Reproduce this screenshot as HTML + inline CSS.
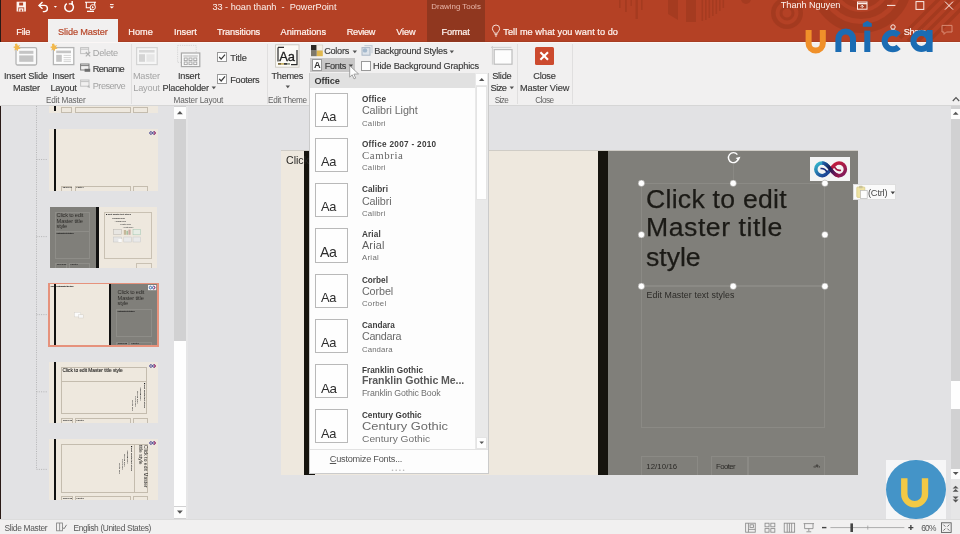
<!DOCTYPE html>
<html>
<head>
<meta charset="utf-8">
<title>PowerPoint Slide Master</title>
<style>
*{box-sizing:border-box;margin:0;padding:0}
html,body{width:960px;height:534px;overflow:hidden;background:#e2e2e4;font-family:"Liberation Sans",sans-serif;}
#app{position:absolute;left:0;top:0;width:960px;height:534px;background:#e2e2e4;filter:blur(0.45px);will-change:transform;}
.abs{position:absolute}
.t{position:absolute;white-space:nowrap;line-height:1;display:block}
svg{position:absolute;overflow:visible}
/* title + tabs */
#titlebar{left:-6px;top:-6px;width:972px;height:47.6px;background:linear-gradient(#b44125,#b44125 97.400%,#9f3a20);}
#ctx{left:427px;top:-6px;width:58px;height:48px;background:#90371f;}
#acttab{left:48px;top:19px;width:70px;height:24px;background:#f1f0f0;}
.tab{color:#fff5f1;font-size:9.2px;top:27.6px;-webkit-text-stroke:0.2px #fff5f1;}
/* ribbon */
#ribbon{left:-6px;top:42px;width:972px;height:64px;background:#f1f0f0;border-bottom:1px solid #d6d6d6;}
.rl{color:#3a3a3a;font-size:9.2px;-webkit-text-stroke:0.15px #3a3a3a;}
.rg{color:#626262;font-size:8.2px;}
.rd{color:#a4a4a4;font-size:9.2px;}
.sep{position:absolute;width:1px;background:#e0dfdf;top:44px;height:60px;}
.cb{position:absolute;width:10px;height:10px;background:#fdfdfd;border:1px solid #999;}
/* status bar */
#status{left:-6px;top:520px;width:972px;height:20px;background:#f1f0f0;}
.st{color:#555;font-size:8.4px;top:523.6px}
</style>
</head>
<body>
<div id="app">
  <!-- TITLE BAR -->
  <div id="titlebar" class="abs"></div>
  <!-- decorative pattern -->
  <svg style="left:0;top:0" width="960" height="42" viewBox="0 0 960 42">
    <g fill="#a1391f" opacity="0.75">
      <rect x="619" y="0" width="1.6" height="8"/><rect x="625" y="0" width="1.8" height="12"/>
      <rect x="630.5" y="0" width="1.4" height="6"/><rect x="635.5" y="0" width="2.4" height="19"/>
      <rect x="641" y="0" width="1.6" height="10"/>
      <path d="M668 0h10v20l-10,-6z"/><rect x="686" y="0" width="10" height="22"/>
      <rect x="701.5" y="0" width="1.6" height="21"/><rect x="705" y="0" width="1.6" height="20"/>
      <rect x="708.5" y="0" width="1.6" height="18"/><rect x="712" y="0" width="1.6" height="16"/>
      <rect x="715.5" y="0" width="1.6" height="14"/><rect x="719" y="0" width="1.6" height="11"/>
      <rect x="722.5" y="0" width="1.6" height="8"/>
      <circle cx="746" cy="-1" r="5"/>
    </g>
    <g fill="none" stroke="#a1391f" opacity="0.8">
      <circle cx="787" cy="13" r="13.700" stroke-width="4.600"/>
      <circle cx="787" cy="13" r="6" stroke-width="3"/>
      <circle cx="861" cy="-18" r="46.500" stroke-width="9"/>
      <circle cx="861" cy="-18" r="33.500" stroke-width="7"/>
      <circle cx="861" cy="-18" r="23" stroke-width="6"/>
      <path d="M900 38L944 -6M908 41L955 -6M918 41L966 -7M930 40L972 -2" stroke-width="3.600"/>
    </g>
  </svg>
  <div id="ctx" class="abs"></div>
  <div id="acttab" class="abs"></div>
  <div class="abs" style="left:-6px;top:-6px;width:7.400px;height:525.600px;background:#2a1a16"></div>

  <!-- quick access icons -->
  <svg style="left:16px;top:1px" width="100" height="12" viewBox="0 0 100 12" fill="none" stroke="#fff" stroke-width="1.2">
    <!-- save -->
    <path d="M0.600 0.700h9.300v9.800h-9.300z" fill="#fdf3ef" stroke="none"/>
    <rect x="3.200" y="1.600" width="3.900" height="2.900" fill="#b44125" stroke="none"/>
    <rect x="2.300" y="6.400" width="5.900" height="4.100" fill="#b44125" stroke="none"/>
    <rect x="3.100" y="7.300" width="4.300" height="3.200" fill="#fdf3ef" stroke="none"/>
    <rect x="4.500" y="8.500" width="1.400" height="2" fill="#b44125" stroke="none"/>
    <!-- undo -->
    <path d="M26.5 1 L23 4.4 L26.5 7.8" stroke-width="1.4"/>
    <path d="M23.3 4.4 h5 a3.1 3.1 0 0 1 0 6.2 h-1.5" stroke-width="1.4"/>
    <path d="M37.8 5 l1.6 1.8 l1.6 -1.8z" fill="#fff" stroke="none"/>
    <!-- redo -->
    <path d="M55.300 2.500 a4.300 4.300 0 1 1 -4.500 0.100" stroke-width="1.500"/>
    <path d="M52.800 2.900 h3.400 v-3" stroke-width="1.400"/>
    <!-- present -->
    <path d="M69 1.2 h11 M70.3 1.2 v5.6 h8.4 v-5.6 M74.5 6.8 v2.2 M71 10.4 h7" stroke-width="1.1"/>
    <circle cx="76.8" cy="6.2" r="2.6" fill="#b44125" stroke-width="0.9"/>
    <path d="M76 5 l2 1.2 l-2 1.2z" fill="#fff" stroke="none"/>
    <!-- customize -->
    <path d="M94 3.6 h3.6" stroke-width="1"/>
    <path d="M93.6 5.4 l2.2 2.2 l2.2 -2.2z" fill="#fff" stroke="none"/>
  </svg>

  <span class="t" style="letter-spacing:-0.02px;left:212.4px;top:3.1px;font-size:9.2px;color:#fdf3ef;white-space:pre">33 - hoan thanh  -  PowerPoint</span>
  <span class="t" style="letter-spacing:0.01px;left:431.3px;top:3.1px;font-size:7.9px;color:#e7b5a8">Drawing Tools</span>
  <span class="t" style="letter-spacing:-0.07px;left:780.8px;top:0.9px;font-size:9.2px;color:#fdf3ef">Thanh Nguyen</span>

  <!-- window buttons -->
  <svg style="left:855px;top:0" width="105" height="14" viewBox="0 0 105 14" fill="none" stroke="#fbeee9" stroke-width="1">
    <rect x="2.5" y="2" width="9.5" height="7.2"/><path d="M2.5 3.6h9.5" stroke-width="1.4"/>
    <path d="M7.2 5.2v3 M5.6 6.8l1.6-1.6l1.6 1.6" stroke-width="0.9"/>
    <path d="M32 5.4h8.4"/>
    <rect x="61" y="1.6" width="7.8" height="7.8"/>
    <path d="M90 1.6l8 8M98 1.6l-8 8"/>
  </svg>

  <!-- tabs -->
  <span class="t tab" style="letter-spacing:-0.25px;left:16.3px;">File</span>
  <span class="t tab" style="letter-spacing:-0.11px;left:58px;color:#b7472a;-webkit-text-stroke:0.2px #b7472a">Slide Master</span>
  <span class="t tab" style="letter-spacing:0.02px;left:128.3px;">Home</span>
  <span class="t tab" style="letter-spacing:-0.03px;left:174px;">Insert</span>
  <span class="t tab" style="letter-spacing:-0.14px;left:217px;">Transitions</span>
  <span class="t tab" style="letter-spacing:0.01px;left:280.5px;">Animations</span>
  <span class="t tab" style="letter-spacing:-0.32px;left:346.8px;">Review</span>
  <span class="t tab" style="letter-spacing:-0.09px;left:396.2px;">View</span>
  <span class="t tab" style="letter-spacing:-0.15px;left:441.5px;">Format</span>
  <span class="t tab" style="letter-spacing:0.05px;left:503.3px;">Tell me what you want to do</span>
  <span class="t tab" style="letter-spacing:-0.51px;left:903.8px;">Share</span>
  <!-- bulb -->
  <svg style="left:491px;top:24px" width="10" height="13" viewBox="0 0 10 13" fill="none" stroke="#fbeee9" stroke-width="0.9">
    <path d="M3.4 9.2 c0-1.6-2-2.4-2-4.6 a3.6 3.6 0 0 1 7.2 0 c0 2.2-2 3-2 4.6z M3.6 10.6h2.8 M4 12h2"/>
  </svg>
  <!-- share person + comment -->
  <svg style="left:888px;top:23px" width="68" height="14" viewBox="0 0 68 14" fill="none" stroke="#fbeee9" stroke-width="1">
    <circle cx="5" cy="4" r="2.2"/><path d="M1 11c0-3 1.8-4.4 4-4.4s4 1.400 4 4.400"/>
    <path d="M54 2.400h10v6.600h-5.600l-2.400 2.400v-2.400h-2z" stroke="#d98a73"/>
  </svg>
  <!-- RIBBON -->
  <div id="ribbon" class="abs"></div>
  <div class="abs" style="left:-6px;top:41.600px;width:972px;height:1px;background:#fbf7f6"></div>
  <div class="sep" style="left:130.5px"></div>
  <div class="sep" style="left:266.5px"></div>
  <div class="sep" style="left:516.5px"></div>
  <div class="sep" style="left:571.5px"></div>

  <!-- Insert Slide Master icon -->
  <svg style="left:13px;top:43px" width="26" height="24" viewBox="0 0 26 24">
    <rect x="3" y="4.600" width="20.600" height="17.400" rx="1.5" fill="#fafafa" stroke="#b4b4b4" stroke-width="1.3"/>
    <rect x="6.200" y="7.800" width="14.200" height="3" fill="#c4c4c4"/>
    <rect x="6.200" y="12.400" width="14.200" height="6.400" fill="#c4c4c4"/>
    <path d="M4 0.600l0.900 2.200l2.300-0.700l-1.300 2l1.700 1.600l-2.400 0.200l-0.300 2.400l-1.500-1.900l-2.100 1.100l0.700-2.300l-2-1.200l2.200-0.800l-0.300-2.300z" fill="#f2b84b"/>
  </svg>
  <span class="t rl" style="letter-spacing:-0.18px;left:4px;top:72.4px">Insert Slide</span>
  <span class="t rl" style="letter-spacing:-0.22px;left:13px;top:84.4px">Master</span>
  <!-- Insert Layout icon -->
  <svg style="left:50px;top:43px" width="26" height="24" viewBox="0 0 26 24">
    <rect x="3.400" y="4.600" width="20.400" height="17" fill="#fdfdfd" stroke="#b4b4b4" stroke-width="1.3"/>
    <rect x="6.200" y="7.600" width="14.800" height="2.600" fill="#c4c4c4"/>
    <rect x="6.200" y="11.800" width="5.600" height="7" fill="#c4c4c4"/>
    <path d="M13.600 12.400h7.400M13.600 14.600h7.400M13.600 16.800h7.400M13.600 18.600h7.400" stroke="#cfcfcf" stroke-width="0.9"/>
    <path d="M4 0.600l0.900 2.200l2.300-0.700l-1.300 2l1.700 1.600l-2.400 0.200l-0.300 2.400l-1.500-1.900l-2.100 1.100l0.700-2.300l-2-1.200l2.200-0.800l-0.300-2.300z" fill="#f2b84b"/>
  </svg>
  <span class="t rl" style="letter-spacing:-0.16px;left:52.300px;top:72.4px">Insert</span>
  <span class="t rl" style="letter-spacing:-0.22px;left:50.400px;top:84.4px">Layout</span>
  <!-- Delete / Rename / Preserve -->
  <svg style="left:80px;top:46px" width="12" height="46" viewBox="0 0 12 46" fill="none">
    <rect x="0.600" y="1.600" width="8" height="6" stroke="#c2c2c2"/><path d="M0.600 3.200h8" stroke="#c2c2c2"/>
    <path d="M5.800 6l4.400 4.400M10.200 6l-4.400 4.400" stroke="#b0b0b0" stroke-width="1.1"/>
    <rect x="0.600" y="18" width="8.400" height="6" stroke="#7d7d7d"/><path d="M0.600 19.600h8.400" stroke="#7d7d7d"/>
    <rect x="4.600" y="22.800" width="5.600" height="3" fill="#6e6e6e"/>
    <rect x="0.600" y="34" width="8.400" height="6.200" stroke="#c2c2c2"/><path d="M0.600 35.600h8.400" stroke="#c2c2c2"/>
    <path d="M7 41l2-2l1 3z" fill="#b5b5b5"/>
  </svg>
  <span class="t rd" style="letter-spacing:-0.23px;left:92.800px;top:49.4px">Delete</span>
  <span class="t rl" style="letter-spacing:-0.59px;left:92.800px;top:65.4px;color:#3c3c3c">Rename</span>
  <span class="t rd" style="letter-spacing:-0.55px;left:92.800px;top:81.7px">Preserve</span>
  <span class="t rg" style="letter-spacing:-0.17px;left:46px;top:97.1px">Edit Master</span>

  <!-- Master Layout (disabled) -->
  <svg style="left:135px;top:45px" width="24" height="22" viewBox="0 0 24 22">
    <rect x="1.600" y="2.600" width="20.600" height="17" fill="#f6f6f6" stroke="#d4d4d4" stroke-width="1.200"/>
    <rect x="4" y="5" width="15.600" height="2.600" fill="#d8d8d8"/>
    <rect x="4" y="9.200" width="6" height="7.600" fill="#d4d4d4"/>
    <rect x="11.400" y="9.200" width="8.200" height="7.600" fill="#e6e6e6"/>
  </svg>
  <span class="t rd" style="letter-spacing:-0.17px;left:132.900px;top:72.4px">Master</span>
  <span class="t rd" style="letter-spacing:-0.20px;left:133.300px;top:84.4px">Layout</span>
  <!-- Insert Placeholder -->
  <svg style="left:176px;top:44px" width="26" height="25" viewBox="0 0 26 25" fill="none">
    <rect x="1.600" y="1.400" width="18.600" height="17" stroke="#d2d2d2" stroke-width="0.9" stroke-dasharray="1.200 1"/>
    <rect x="5.400" y="9" width="18.400" height="13.600" fill="#f8f8f8" stroke="#a8a8a8" stroke-width="1.200"/>
    <path d="M7.400 12h14.400" stroke="#b4b4b4" stroke-width="1"/>
    <g stroke="#a4a4a4" stroke-width="0.9"><rect x="8.200" y="14" width="3" height="2.600"/><rect x="13" y="14" width="3" height="2.600"/><rect x="17.800" y="14" width="3" height="2.600"/>
    <rect x="8.200" y="18" width="3" height="2.600"/><rect x="13" y="18" width="3" height="2.600"/><rect x="17.800" y="18" width="3" height="2.600"/></g>
  </svg>
  <span class="t rl" style="letter-spacing:-0.18px;left:177.900px;top:72.4px">Insert</span>
  <span class="t rl" style="letter-spacing:-0.20px;left:162.500px;top:84.4px">Placeholder</span>
  <svg style="left:211px;top:86px" width="6" height="4" viewBox="0 0 6 4"><path d="M0.600 0.600h4.400l-2.200 2.600z" fill="#555"/></svg>
  <div class="cb" style="left:217px;top:52.400px"></div>
  <div class="cb" style="left:217px;top:74.200px"></div>
  <svg style="left:217px;top:52.400px" width="10" height="32" viewBox="0 0 10 32" fill="none" stroke="#3a3a3a" stroke-width="1.200">
    <path d="M2.200 5l2 2.200l3.800-4.600"/><path d="M2.200 26.800l2 2.200l3.800-4.600"/>
  </svg>
  <span class="t rl" style="letter-spacing:-0.14px;left:230.300px;top:54.4px">Title</span>
  <span class="t rl" style="letter-spacing:-0.29px;left:230.300px;top:76.2px">Footers</span>
  <span class="t rg" style="letter-spacing:-0.18px;left:173.600px;top:97.1px">Master Layout</span>

  <!-- Themes -->
  <svg style="left:274px;top:43px" width="27" height="26" viewBox="0 0 27 26">
    <rect x="1.600" y="1.800" width="23.400" height="22.400" fill="#fbfaf6" stroke="#c9c6bd" stroke-width="0.9"/>
    <path d="M4 4.400h6M4 4.400v14M23 7v14.600h-6" fill="none" stroke="#2a2a2a" stroke-width="1.200"/>
    <text x="5.200" y="17.600" font-family="Liberation Sans, sans-serif" font-size="12.500" fill="#1c1c1c" stroke="#1c1c1c" stroke-width="0.300" textLength="15.800" lengthAdjust="spacingAndGlyphs">Aa</text>
    <rect x="4" y="20" width="3" height="1.800" fill="#7a6a3c"/><rect x="7" y="20" width="3" height="1.800" fill="#c9b46a"/>
    <rect x="10" y="20" width="3" height="1.800" fill="#3e3e3e"/><rect x="13" y="20" width="3" height="1.800" fill="#98a08a"/>
  </svg>
  <span class="t rl" style="letter-spacing:-0.28px;left:271.500px;top:72.4px">Themes</span>
  <svg style="left:284.500px;top:85px" width="6" height="4" viewBox="0 0 6 4"><path d="M0.600 0.600h4.400l-2.200 2.600z" fill="#555"/></svg>
  <span class="t rg" style="letter-spacing:-0.30px;left:268px;top:97.1px">Edit Theme</span>

  <!-- Colors -->
  <svg style="left:311px;top:44.500px" width="12" height="12" viewBox="0 0 12 12">
    <rect x="0" y="0" width="5.800" height="5.600" fill="#2c2a26"/><rect x="5.800" y="0" width="6" height="5.600" fill="#f4f1e8" stroke="#c8c4b8" stroke-width="0.500"/>
    <rect x="0" y="5.600" width="5.800" height="5.600" fill="#7d786c"/><rect x="5.800" y="5.600" width="6" height="5.600" fill="#e0b74e"/>
  </svg>
  <span class="t rl" style="letter-spacing:-0.29px;left:324.200px;top:47.4px">Colors</span>
  <svg style="left:351.500px;top:49.500px" width="6" height="4" viewBox="0 0 6 4"><path d="M0.600 0.600h4.400l-2.200 2.600z" fill="#555"/></svg>
  <!-- Background styles -->
  <svg style="left:361px;top:44px" width="12" height="13" viewBox="0 0 12 13" fill="none">
    <path d="M3.400 1.600h7.600v7.600" stroke="#c3ccd6" stroke-width="1.100"/>
    <rect x="1" y="3.600" width="8" height="7.600" fill="#dde3ea" stroke="#aab7c5" stroke-width="1"/>
    <circle cx="4" cy="6.400" r="2.200" fill="#a3b8cc"/>
  </svg>
  <span class="t rl" style="letter-spacing:-0.21px;left:374.300px;top:47.4px">Background Styles</span>
  <svg style="left:449px;top:49.500px" width="6" height="4" viewBox="0 0 6 4"><path d="M0.600 0.600h4.400l-2.200 2.600z" fill="#555"/></svg>
  <!-- Fonts (pressed) -->
  <div class="abs" style="left:310px;top:58px;width:45px;height:14px;background:#c8c7c7"></div>
  <div class="abs" style="left:311.500px;top:59.300px;width:10.800px;height:11.400px;background:#fcfcfc;border:0.6px solid #9a9a9a"></div>
  <span class="t" style="left:314px;top:61.300px;font-size:9.200px;color:#333;font-weight:bold">A</span>
  <span class="t rl" style="letter-spacing:-0.34px;left:324.700px;top:62.2px">Fonts</span>
  <svg style="left:347.500px;top:64.400px" width="6" height="4" viewBox="0 0 6 4"><path d="M0.600 0.600h4.400l-2.200 2.600z" fill="#444"/></svg>
  <div class="cb" style="left:360.500px;top:60.600px"></div>
  <span class="t rl" style="letter-spacing:-0.16px;left:373px;top:62.2px">Hide Background Graphics</span>

  <!-- Slide size -->
  <svg style="left:490px;top:45px" width="24" height="22" viewBox="0 0 24 22" fill="none">
    <path d="M1 2.400h20.400M2.400 1v18.600" stroke="#cfcfcf" stroke-width="1"/>
    <rect x="4.200" y="4.600" width="17.800" height="14.600" fill="#fdfdfd" stroke="#bdbdbd" stroke-width="1.200"/>
  </svg>
  <span class="t rl" style="letter-spacing:-0.25px;left:492.200px;top:72.4px">Slide</span>
  <span class="t rl" style="letter-spacing:-0.54px;left:490.600px;top:84.0px">Size</span>
  <svg style="left:508.500px;top:85.800px" width="6" height="4" viewBox="0 0 6 4"><path d="M0.600 0.600h4.400l-2.200 2.600z" fill="#555"/></svg>
  <span class="t rg" style="letter-spacing:-0.58px;left:494.700px;top:97.1px">Size</span>
  <!-- Close master view -->
  <div class="abs" style="left:535.300px;top:47px;width:18.400px;height:18px;background:#cc4a2e;border-radius:1.500px"></div>
  <svg style="left:535.300px;top:47px" width="18.400" height="18" viewBox="0 0 18.400 18"><path d="M5.400 5.200l7.600 7.600M13 5.200l-7.600 7.600" stroke="#fff" stroke-width="2.100" fill="none"/></svg>
  <span class="t rl" style="letter-spacing:-0.24px;left:533.300px;top:72.4px">Close</span>
  <span class="t rl" style="letter-spacing:-0.11px;left:520px;top:84.0px">Master View</span>
  <span class="t rg" style="letter-spacing:-0.53px;left:535.300px;top:97.1px">Close</span>
  <!-- collapse caret -->
  <svg style="left:951.500px;top:96px" width="8" height="6" viewBox="0 0 8 6"><path d="M0.800 5l3.200-3.400l3.200 3.400" fill="none" stroke="#555" stroke-width="1.200"/></svg>
  <!-- LEFT PANEL -->
  <div class="abs" style="left:1.400px;top:106px;width:187px;height:414px;background:#e2e2e4"></div>
  <!-- panel scrollbar -->
  <div class="abs" style="left:174px;top:106px;width:12.400px;height:414px;background:#d1d1d2"></div>
  <div class="abs" style="left:186.400px;top:106px;width:2px;height:414px;background:#e6e6e7"></div>
  <div class="abs" style="left:174.400px;top:107.400px;width:11.600px;height:11.600px;background:#fdfdfd"></div>
  <div class="abs" style="left:174.400px;top:340.500px;width:11.600px;height:165px;background:#fefefe"></div>
  <div class="abs" style="left:174.400px;top:507px;width:11.600px;height:11.400px;background:#fdfdfd"></div>
  <svg style="left:174.400px;top:107.400px" width="12" height="412" viewBox="0 0 12 412">
    <path d="M3 7.200l2.900-3.200l2.900 3.200z" fill="#555"/>
    <path d="M3 403.600l2.900 3.200l2.900-3.200z" fill="#555"/>
  </svg>
  <!-- tree dotted lines -->
  <svg style="left:0;top:106px" width="50" height="414" viewBox="0 0 50 414" fill="none" stroke="#a9a9ab" stroke-width="0.800" stroke-dasharray="1 1.300">
    <path d="M36.500 0v363.400M36.500 53.500h11M36.500 130.600h11M36.500 208.600h11M36.500 285.800h11M36.500 363.400h11"/>
  </svg>

  <!-- thumb 1 (partially visible) -->
  <div class="abs" style="left:49px;top:106px;width:109px;height:6.600px;background:#eee8de;overflow:hidden">
    <div class="abs" style="left:4.600px;top:0;width:2.500px;height:4.500px;background:#111"></div>
    <div class="abs" style="left:12px;top:1px;width:11.200px;height:6px;border:0.600px solid #c4bcae"></div>
    <div class="abs" style="left:25.600px;top:1px;width:56.400px;height:6px;border:0.600px solid #c4bcae"></div>
    <div class="abs" style="left:84.400px;top:1px;width:14.200px;height:6px;border:0.600px solid #c4bcae"></div>
  </div>

  <!-- thumb 2 -->
  <div class="abs" style="left:49px;top:128.600px;width:109px;height:62px;background:#eee8de;overflow:hidden">
    <div class="abs" style="left:4.600px;top:0;width:2.500px;height:62px;background:#111"></div>
    <div class="abs" style="left:12px;top:57px;width:11.200px;height:6px;border:0.600px solid #c4bcae"></div>
    <div class="abs" style="left:25.600px;top:57px;width:56.400px;height:6px;border:0.600px solid #c4bcae"></div>
    <div class="abs" style="left:84.400px;top:57px;width:14.200px;height:6px;border:0.600px solid #c4bcae"></div>
    <span class="t" style="left:13.500px;top:58.600px;font-size:2.400px;color:#222;font-weight:bold">12/10/16</span>
    <span class="t" style="left:27.200px;top:58.600px;font-size:2.400px;color:#222;font-weight:bold">Footer</span>
    <svg style="left:99.600px;top:2.400px" width="7" height="4" viewBox="0 0 34 20"><path d="M10 3a7 7 0 1 0 0 14c5 0 9-14 14-14a7 7 0 1 1 0 14c-5 0-9-14-14-14z" fill="none" stroke="#3c3a8c" stroke-width="4.500"/><path d="M24 3a7 7 0 1 1 0 14" fill="none" stroke="#c2326a" stroke-width="4.500"/></svg>
  </div>

  <!-- thumb 3 -->
  <div class="abs" style="left:49.800px;top:206.800px;width:107.400px;height:61px;background:#eee8de;overflow:hidden">
    <div class="abs" style="left:0;top:0;width:46.400px;height:61px;background:#807f7a"></div>
    <div class="abs" style="left:46.400px;top:0;width:2.500px;height:61px;background:#111"></div>
    <div class="abs" style="left:5.500px;top:5.200px;width:35.200px;height:47.400px;border:0.500px solid #8e8d88"></div>
    <div class="abs" style="left:5.500px;top:24.600px;width:35.200px;height:0.500px;background:#8e8d88"></div>
    <span class="t" style="letter-spacing:-0.19px;left:6.800px;top:6.200px;font-size:5.600px;color:#2c2b28">Click to edit</span>
    <span class="t" style="letter-spacing:-0.11px;left:6.800px;top:11.800px;font-size:5.600px;color:#2c2b28">Master title</span>
    <span class="t" style="letter-spacing:-0.26px;left:6.800px;top:17.400px;font-size:5.600px;color:#2c2b28">style</span>
    <span class="t" style="letter-spacing:-0.36px;left:6.800px;top:26.200px;font-size:2.400px;color:#222;font-weight:bold">Edit Master text styles</span>
    <div class="abs" style="left:5.500px;top:56px;width:12px;height:6px;border:0.500px solid #8e8d88"></div>
    <div class="abs" style="left:19px;top:56px;width:21.700px;height:6px;border:0.500px solid #8e8d88"></div>
    <span class="t" style="left:7.200px;top:57.600px;font-size:2.400px;color:#222;font-weight:bold">12/10/16</span>
    <span class="t" style="left:20.600px;top:57.600px;font-size:2.400px;color:#222;font-weight:bold">Footer</span>
    <div class="abs" style="left:54.400px;top:5.200px;width:47.600px;height:47.400px;border:0.600px solid #c9c1b3"></div>
    <span class="t" style="left:56.200px;top:6.600px;font-size:2.200px;color:#111;font-weight:bold">■ Edit Master text styles</span>
    <span class="t" style="left:60.800px;top:10.200px;font-size:2.100px;color:#222;font-weight:bold">– Second level</span>
    <span class="t" style="left:65px;top:13.600px;font-size:2px;color:#333;font-weight:bold">• Third level</span>
    <span class="t" style="left:69px;top:16.800px;font-size:1.900px;color:#444;font-weight:bold">– Fourth level</span>
    <span class="t" style="left:73px;top:19.800px;font-size:1.900px;color:#444;font-weight:bold">» Fifth level</span>
    <svg style="left:63.500px;top:21.800px" width="30" height="15" viewBox="0 0 30 15" fill="none">
      <rect x="0.600" y="0.600" width="8" height="5" fill="#e8e6e2" stroke="#b7b4ae" stroke-width="0.500"/>
      <rect x="10.800" y="1" width="2.200" height="4.800" fill="#c6b79a"/><rect x="13.400" y="1.800" width="1.600" height="4" fill="#a8c0a0"/><rect x="15.400" y="0.600" width="2.200" height="5.200" fill="#c9a9a0"/>
      <rect x="20" y="0.400" width="7.600" height="5.400" fill="#e6ece4" stroke="#9fc3ad" stroke-width="0.500"/>
      <rect x="0.600" y="8" width="8" height="5" fill="#e6e6e6" stroke="#c4c4c4" stroke-width="0.500"/><rect x="5.400" y="10" width="3.400" height="3" fill="#fafafa"/>
      <rect x="10.800" y="8" width="7.600" height="5" fill="#e9e9e9" stroke="#c8c8c8" stroke-width="0.500"/>
      <rect x="20" y="8" width="7.600" height="5" fill="#e9e9e9" stroke="#c8c8c8" stroke-width="0.500"/>
    </svg>
    <div class="abs" style="left:86.400px;top:56.400px;width:15.400px;height:6px;border:0.600px solid #c9c1b3"></div>
  </div>

  <!-- thumb 4 (selected) -->
  <div class="abs" style="left:48.200px;top:282.600px;width:110.800px;height:64.200px;background:#e6927c"></div>
  <div class="abs" style="left:49.800px;top:284.200px;width:107.600px;height:61px;background:#eee8de;overflow:hidden">
    <div class="abs" style="left:60.800px;top:0;width:46.800px;height:61px;background:#807f7a"></div>
    <div class="abs" style="left:3.800px;top:0;width:2.500px;height:61px;background:#111"></div>
    <div class="abs" style="left:58.900px;top:0;width:2px;height:61px;background:#111"></div>
    <span class="t" style="letter-spacing:-0.27px;left:0.600px;top:0.600px;font-size:2.300px;color:#111;font-weight:bold">Click to edit Master title style</span>
    <svg style="left:24.600px;top:27.400px" width="10" height="7" viewBox="0 0 10 7"><rect x="0.300" y="0.300" width="6.400" height="4.600" fill="#fbfbfb" stroke="#d0ccc4" stroke-width="0.400"/><rect x="4.600" y="2.800" width="4.600" height="3.200" fill="#f6f6f6" stroke="#cfcac2" stroke-width="0.400"/></svg>
    <svg style="left:98.200px;top:1px" width="8.200" height="5.200" viewBox="0 0 41 26"><rect width="41" height="26" fill="#f2f2f2"/><g transform="translate(3.500,3)"><path d="M10 3a7 7 0 1 0 0 14c5 0 9-14 14-14a7 7 0 1 1 0 14c-5 0-9-14-14-14z" fill="none" stroke="#2a5fa8" stroke-width="4.500"/><path d="M24 3a7 7 0 1 1 0 14" fill="none" stroke="#c2326a" stroke-width="4.500"/></g></svg>
    <span class="t" style="letter-spacing:-0.19px;left:67.800px;top:5.800px;font-size:5.600px;color:#2c2b28">Click to edit</span>
    <span class="t" style="letter-spacing:-0.11px;left:67.800px;top:11.400px;font-size:5.600px;color:#2c2b28">Master title</span>
    <span class="t" style="letter-spacing:-0.26px;left:67.800px;top:17px;font-size:5.600px;color:#2c2b28">style</span>
    <div class="abs" style="left:66.400px;top:25.200px;width:35.600px;height:28px;border:0.500px solid #8e8d88"></div>
    <span class="t" style="letter-spacing:-0.36px;left:67.800px;top:26.400px;font-size:2.400px;color:#222;font-weight:bold">Edit Master text styles</span>
    <div class="abs" style="left:66.400px;top:57.400px;width:11.400px;height:5px;border:0.500px solid #8e8d88"></div>
    <div class="abs" style="left:80px;top:57.400px;width:22px;height:5px;border:0.500px solid #8e8d88"></div>
    <span class="t" style="left:68px;top:58.600px;font-size:2.400px;color:#222;font-weight:bold">12/10/16</span>
    <span class="t" style="left:81.600px;top:58.600px;font-size:2.400px;color:#222;font-weight:bold">Footer</span>
  </div>

  <!-- thumb 5 -->
  <div class="abs" style="left:49px;top:361.500px;width:108.700px;height:61.500px;background:#eee8de;overflow:hidden">
    <div class="abs" style="left:4.600px;top:0;width:2.500px;height:61.500px;background:#111"></div>
    <div class="abs" style="left:12.200px;top:5.400px;width:85.600px;height:14.400px;border:0.600px solid #c4bcae;border-bottom:none"></div>
    <div class="abs" style="left:12.200px;top:19.200px;width:85.600px;height:33.800px;border:0.600px solid #c4bcae"></div>
    <span class="t" style="letter-spacing:-0.02px;left:13.500px;top:7.700px;font-size:4.800px;color:#1e1d1b;-webkit-text-stroke:0.1px #1e1d1b">Click to edit Master title style</span>
    <div class="abs" style="left:12.400px;top:56.800px;width:11.200px;height:6px;border:0.600px solid #c4bcae"></div>
    <div class="abs" style="left:25.700px;top:56.800px;width:56.200px;height:6px;border:0.600px solid #c4bcae"></div>
    <div class="abs" style="left:84.400px;top:56.800px;width:14.200px;height:6px;border:0.600px solid #c4bcae"></div>
    <span class="t" style="left:13.800px;top:58.400px;font-size:2.400px;color:#222;font-weight:bold">12/10/16</span>
    <span class="t" style="left:27.400px;top:58.400px;font-size:2.400px;color:#222;font-weight:bold">Footer</span>
    <svg style="left:99.600px;top:2.300px" width="7" height="4" viewBox="0 0 34 20"><path d="M10 3a7 7 0 1 0 0 14c5 0 9-14 14-14a7 7 0 1 1 0 14c-5 0-9-14-14-14z" fill="none" stroke="#3c3a8c" stroke-width="4.500"/><path d="M24 3a7 7 0 1 1 0 14" fill="none" stroke="#c2326a" stroke-width="4.500"/></svg>
    <!-- rotated bullet text -->
    <div class="abs" style="left:96.600px;top:21.500px;width:0;height:0;transform:rotate(90deg);transform-origin:0 0">
      <span class="t" style="left:0;top:0;font-size:2.200px;color:#111;font-weight:bold">■ Edit Master text styles</span>
      <span class="t" style="left:4.500px;top:3.600px;font-size:2.100px;color:#333;font-weight:bold">Second level</span>
      <span class="t" style="left:8.500px;top:7.200px;font-size:2px;color:#333;font-weight:bold">■ Third level</span>
      <span class="t" style="left:13px;top:10.400px;font-size:1.900px;color:#555;font-weight:bold">Fourth level</span>
      <span class="t" style="left:17.500px;top:13.400px;font-size:1.900px;color:#444;font-weight:bold">■ Fifth level</span>
    </div>
  </div>

  <!-- thumb 6 -->
  <div class="abs" style="left:49px;top:438.800px;width:108.700px;height:61.300px;background:#eee8de;overflow:hidden">
    <div class="abs" style="left:4.600px;top:0;width:2.500px;height:61.300px;background:#111"></div>
    <div class="abs" style="left:12.200px;top:5.400px;width:73.700px;height:48.400px;border:0.600px solid #c4bcae"></div>
    <div class="abs" style="left:85.300px;top:5.400px;width:13.800px;height:48.400px;border:0.600px solid #c4bcae"></div>
    <div class="abs" style="left:98.200px;top:6.200px;width:0;height:0;transform:rotate(90deg);transform-origin:0 0">
      <span class="t" style="letter-spacing:0.09px;left:0;top:0;font-size:4.800px;color:#262523">Click to edit Master</span>
      <span class="t" style="letter-spacing:0.08px;left:0;top:5px;font-size:4.800px;color:#262523">title style</span>
    </div>
    <div class="abs" style="left:83.800px;top:7px;width:0;height:0;transform:rotate(90deg);transform-origin:0 0">
      <span class="t" style="left:0;top:0;font-size:2.200px;color:#111;font-weight:bold">■ Edit Master text styles</span>
      <span class="t" style="left:4.500px;top:3.600px;font-size:2.100px;color:#333;font-weight:bold">Second level</span>
      <span class="t" style="left:8.500px;top:7.200px;font-size:2px;color:#333;font-weight:bold">■ Third level</span>
      <span class="t" style="left:13px;top:10.400px;font-size:1.900px;color:#555;font-weight:bold">Fourth level</span>
      <span class="t" style="left:17.500px;top:13.400px;font-size:1.900px;color:#444;font-weight:bold">■ Fifth level</span>
    </div>
    <div class="abs" style="left:12.400px;top:57.400px;width:11.200px;height:6px;border:0.600px solid #c4bcae"></div>
    <div class="abs" style="left:25.700px;top:57.400px;width:56.200px;height:6px;border:0.600px solid #c4bcae"></div>
    <div class="abs" style="left:84.400px;top:57.400px;width:14.200px;height:6px;border:0.600px solid #c4bcae"></div>
    <span class="t" style="left:13.800px;top:58.800px;font-size:2.400px;color:#222;font-weight:bold">12/10/16</span>
    <span class="t" style="left:27.400px;top:58.800px;font-size:2.400px;color:#222;font-weight:bold">Footer</span>
    <svg style="left:99.600px;top:2.300px" width="7" height="4" viewBox="0 0 34 20"><path d="M10 3a7 7 0 1 0 0 14c5 0 9-14 14-14a7 7 0 1 1 0 14c-5 0-9-14-14-14z" fill="none" stroke="#3c3a8c" stroke-width="4.500"/><path d="M24 3a7 7 0 1 1 0 14" fill="none" stroke="#c2326a" stroke-width="4.500"/></svg>
  </div>
  <!-- MAIN SLIDE -->
  <div class="abs" style="left:280.600px;top:150px;width:577.800px;height:325.400px;background:#cfccc6"></div>
  <div class="abs" style="left:281.200px;top:150.500px;width:576.600px;height:324.400px;background:#eee8de;overflow:hidden">
    <div class="abs" style="left:23.300px;top:0;width:5.400px;height:325px;background:#16140e"></div>
    <div class="abs" style="left:316.500px;top:0;width:10.700px;height:325px;background:#16140e"></div>
    <div class="abs" style="left:327.100px;top:0;width:250px;height:325px;background:#807f7a"></div>
    <span class="t" style="left:4.800px;top:4.200px;font-size:10.600px;color:#2a2926">Click to edit Master title style</span>
    <!-- placeholders (dotted outlines) -->
    <div class="abs" style="left:360.300px;top:135.200px;width:183.600px;height:142.600px;border:0.600px solid #8b8a85"></div>
    <div class="abs" style="left:360.300px;top:305.200px;width:57px;height:21px;border:0.600px solid #8b8a85"></div>
    <div class="abs" style="left:429.900px;top:305.200px;width:37px;height:21px;border:0.600px solid #8b8a85"></div>
    <div class="abs" style="left:466.800px;top:305.200px;width:77px;height:21px;border:0.600px solid #8b8a85"></div>
    <!-- selected title placeholder -->
    <div class="abs" style="left:360.300px;top:32.200px;width:183.600px;height:103.200px;border:0.600px solid #8b8a85"></div>
    <div class="abs" style="left:451.900px;top:12px;width:0.600px;height:20px;background:#8a8984"></div>
    <span class="t" style="letter-spacing:0.27px;left:364.800px;top:35.500px;font-size:26.600px;color:#1b1a16;-webkit-text-stroke:0.25px #1b1a16">Click to edit</span>
    <span class="t" style="letter-spacing:0.56px;left:364.800px;top:63.600px;font-size:26.600px;color:#1b1a16;-webkit-text-stroke:0.25px #1b1a16">Master title</span>
    <span class="t" style="letter-spacing:-0.02px;left:364.800px;top:93.600px;font-size:26.600px;color:#1b1a16;-webkit-text-stroke:0.25px #1b1a16">style</span>
    <span class="t" style="letter-spacing:0.08px;left:365.300px;top:140.200px;font-size:8.800px;color:#2b2a27">Edit Master text styles</span>
    <span class="t" style="letter-spacing:0.08px;left:365.100px;top:312.200px;font-size:7.800px;color:#2b2a27">12/10/16</span>
    <span class="t" style="letter-spacing:-0.59px;left:434.900px;top:312.200px;font-size:7.800px;color:#2b2a27">Footer</span>
    <span class="t" style="letter-spacing:0.05px;left:532.100px;top:313.200px;font-size:5.600px;color:#2b2a27">‹#›</span>
    <!-- logo -->
    <div class="abs" style="left:528.600px;top:6.900px;width:40.500px;height:23.800px;background:#f4f4f4"></div>
    <svg style="left:528.600px;top:6.900px" width="40.500" height="23.800" viewBox="0 0 40.500 23.800" fill="none">
      <defs>
        <linearGradient id="lgA" gradientUnits="userSpaceOnUse" x1="4" y1="4" x2="37" y2="20">
          <stop offset="0" stop-color="#35bdd0"/><stop offset="0.250" stop-color="#1f5ea8"/><stop offset="0.480" stop-color="#181a4e"/>
          <stop offset="0.620" stop-color="#5a1758"/><stop offset="0.850" stop-color="#b3163f"/><stop offset="1" stop-color="#c81e3c"/>
        </linearGradient>
        <linearGradient id="lgL" gradientUnits="userSpaceOnUse" x1="5" y1="6" x2="14" y2="20"><stop offset="0" stop-color="#35bdd0"/><stop offset="1" stop-color="#1b3f93"/></linearGradient>
        <linearGradient id="lgR" gradientUnits="userSpaceOnUse" x1="27" y1="4" x2="36" y2="19"><stop offset="0" stop-color="#c41c3c"/><stop offset="1" stop-color="#7a1a5c"/></linearGradient>
      </defs>
      <path d="M20.600 12.300C17.600 8 15.200 5.900 12.200 5.900A6.400 6.400 0 1 0 12.200 18.700C15.200 18.700 17.600 16.600 20.600 12.300" stroke="url(#lgL)" stroke-width="3.500"/>
      <path d="M20.600 12.300C23.600 8 26 5.900 29 5.900A6.400 6.400 0 1 1 29 18.700C26 18.700 23.600 16.600 20.600 12.300" stroke="url(#lgR)" stroke-width="3.500"/>
      <path d="M12.200 5.900C15.200 5.900 17.600 8 20.600 12.300C23.600 16.600 26 18.700 29 18.700" stroke="url(#lgA)" stroke-width="3.500"/>
      <path d="M10.500 11.600c2.500-0.600 5 0.800 6.800 3.600" stroke="#1b2f7c" stroke-width="1.600"/>
      <path d="M31 13.200c-2.600 0.700-5-0.700-6.600-3.400" stroke="#a3173f" stroke-width="1.600"/>
    </svg>
    <!-- handles -->
    <svg style="left:0;top:0" width="577" height="325" viewBox="0 0 577 325">
      <g fill="#fff" stroke="#8e8d88" stroke-width="0.500">
        <circle cx="360.400" cy="32.300" r="3.200"/><circle cx="452.200" cy="32.300" r="3.200"/><circle cx="543.900" cy="32.300" r="3.200"/>
        <circle cx="360.400" cy="83.700" r="3.200"/><circle cx="543.900" cy="83.700" r="3.200"/>
        <circle cx="360.400" cy="135.300" r="3.200"/><circle cx="452.200" cy="135.300" r="3.200"/><circle cx="543.900" cy="135.300" r="3.200"/>
      </g>
      <path d="M456.400 3.600a5 5 0 1 0 1 3.600" fill="none" stroke="#fff" stroke-width="1.400"/>
      <path d="M454.600 7l3.200 2.600l1.600-3.800z" fill="#fff"/>
    </svg>
  </div>

  <!-- paste options tag -->
  <div class="abs" style="left:853px;top:184px;width:43.400px;height:16.200px;background:#fafafa;border:0.500px solid #dedede"></div>
  <svg style="left:855.500px;top:185.200px" width="12" height="14" viewBox="0 0 12 14">
    <rect x="0.800" y="2" width="8" height="10.400" rx="0.800" fill="#eee2a2" stroke="#d6c985" stroke-width="0.700"/>
    <rect x="3" y="0.800" width="3.600" height="2.400" rx="0.600" fill="#c9c39a"/>
    <rect x="4.600" y="5.400" width="6.600" height="8" fill="#fdfdfd" stroke="#b9b9b9" stroke-width="0.700"/>
  </svg>
  <span class="t" style="letter-spacing:-0.25px;left:868px;top:187.600px;font-size:9.400px;color:#4a4a4a">(Ctrl)</span>
  <svg style="left:889.800px;top:190.500px" width="6" height="4" viewBox="0 0 6 4"><path d="M0.600 0.600h4.400l-2.200 2.600z" fill="#444"/></svg>

  <!-- right scrollbar -->
  <div class="abs" style="left:951px;top:106px;width:15px;height:414px;background:#d1d1d2"></div>
  <div class="abs" style="left:951.400px;top:108.600px;width:14.600px;height:10px;background:#fdfdfd"></div>
  <div class="abs" style="left:951.400px;top:380.800px;width:14.600px;height:27.800px;background:#fefefe"></div>
  <div class="abs" style="left:951.400px;top:469px;width:14.600px;height:9.600px;background:#fdfdfd"></div>
  <div class="abs" style="left:951px;top:479px;width:15px;height:41px;background:#e6e6e7"></div>
  <svg style="left:951px;top:106px" width="9" height="414" viewBox="0 0 9 414" fill="#555">
    <path d="M1.800 8.800l2.900-3l2.900 3z"/>
    <path d="M1.800 366l2.900 3l2.900-3z"/>
    <path d="M1.600 382.600l3-2.800l3 2.800z M1.600 385.800l3-2.800l3 2.800z"/>
    <path d="M1.600 390.400l3 2.800l3-2.800z M1.600 393.600l3 2.800l3-2.800z"/>
  </svg>

  <!-- U watermark -->
  <div class="abs" style="left:886.200px;top:459.800px;width:59.800px;height:59.800px;background:#f6f6f7"></div>
  <div class="abs" style="left:886.200px;top:459.700px;width:59.800px;height:59.800px;border-radius:50%;background:#4494c8"></div>
  <svg style="left:898px;top:476px" width="36" height="34" viewBox="0 0 36 34"><path d="M6.300 2.300v15.600a10.350 10.350 0 0 0 20.700 0v-15.600" fill="none" stroke="#f2c946" stroke-width="6.400"/></svg>

  <!-- Unica overlay logo -->
  <svg style="left:800px;top:18px" width="140" height="38" viewBox="0 0 140 38" fill="none" stroke-linecap="butt">
    <path d="M8.600 12v13.400a7.100 7.100 0 0 0 14.200 0v-13.400" stroke="#f0902a" stroke-width="6"/>
    <path d="M38.400 34v-13.200a7.300 7.300 0 0 1 14.600 0v13.200" stroke="#1b6cb3" stroke-width="6"/>
    <path d="M67.300 12.600v21.400" stroke="#1b6cb3" stroke-width="6"/>
    <path d="M62.800 8.800v-3.200l4.500-2.800l4.500 2.800v3.200z" fill="#1b6cb3"/>
    <path d="M98.600 17.200a8.200 8.200 0 1 0 0 11.600" stroke="#1b6cb3" stroke-width="6"/>
    <circle cx="121.400" cy="23" r="8" stroke="#1b6cb3" stroke-width="6"/>
    <path d="M129.600 12v22" stroke="#1b6cb3" stroke-width="6"/>
  </svg>
  <!-- FONTS DROPDOWN -->
  <div class="abs" style="left:305px;top:472px;width:10.400px;height:2.900px;background:#16140e"></div>
  <div class="abs" style="left:309.200px;top:72.500px;width:179.400px;height:401.200px;background:#cbcbcb"></div>
  <div class="abs" style="left:310px;top:73.200px;width:177.600px;height:399.700px;background:#fdfdfd"></div>
  <div class="abs" style="left:310px;top:73.200px;width:164.600px;height:14.500px;background:#e1e1e1"></div>
  <span class="t" style="letter-spacing:-0.11px;left:314.400px;top:77px;font-size:9.200px;font-weight:bold;color:#3a3a3a">Office</span>
  <div class="abs" style="left:474.600px;top:73.200px;width:13px;height:376px;background:#e9e9e9"></div>
  <div class="abs" style="left:475.600px;top:74px;width:11.400px;height:11.400px;background:#fefefe"></div>
  <div class="abs" style="left:475.600px;top:86px;width:11.400px;height:114.400px;background:#fefefe;border:0.600px solid #e4e4e4"></div>
  <div class="abs" style="left:475.600px;top:437.200px;width:11.400px;height:11.400px;background:#fefefe;border:0.600px solid #e4e4e4"></div>
  <svg style="left:475.600px;top:74px" width="12" height="376" viewBox="0 0 12 376" fill="#555"><path d="M3 7l2.700-3l2.700 3z"/><path d="M3.400 367.400l2.300 2.600l2.300-2.600z"/></svg>
  <div class="abs" style="left:315.300px;top:92.7px;width:32.600px;height:34.200px;background:#fefefe;border:0.900px solid #b9b9b9"></div>
  <span class="t" style="letter-spacing:-0.48px;left:321.1px;top:110.9px;font-size:12.8px;color:#2d2d2d">Aa</span>
  <span class="t" style="letter-spacing:0.21px;left:361.900px;top:95.8px;font-size:8.200px;font-weight:bold;color:#3d3d3d">Office</span>
  <span class="t" style="letter-spacing:-0.10px;left:361.900px;top:105.1px;font-size:10.8px;font-weight:400;font-family:'Liberation Sans',sans-serif;color:#6b6b6b">Calibri Light</span>
  <span class="t" style="letter-spacing:0.27px;left:361.900px;top:119.5px;font-size:7.800px;color:#707070">Calibri</span>
  <div class="abs" style="left:315.300px;top:137.9px;width:32.600px;height:34.200px;background:#fefefe;border:0.900px solid #b9b9b9"></div>
  <span class="t" style="letter-spacing:-0.48px;left:321.1px;top:156.1px;font-size:12.8px;color:#2d2d2d">Aa</span>
  <span class="t" style="letter-spacing:0.30px;left:361.900px;top:141.0px;font-size:8.200px;font-weight:bold;color:#3d3d3d">Office 2007 - 2010</span>
  <span class="t" style="letter-spacing:0.64px;left:361.900px;top:149.6px;font-size:10.8px;font-weight:400;font-family:'Liberation Serif',serif;color:#666">Cambria</span>
  <span class="t" style="letter-spacing:0.27px;left:361.900px;top:163.8px;font-size:7.800px;color:#707070">Calibri</span>
  <div class="abs" style="left:315.300px;top:183.2px;width:32.600px;height:34.200px;background:#fefefe;border:0.900px solid #b9b9b9"></div>
  <span class="t" style="letter-spacing:-0.48px;left:321.1px;top:201.3px;font-size:12.8px;color:#2d2d2d">Aa</span>
  <span class="t" style="letter-spacing:0.09px;left:361.900px;top:186.2px;font-size:8.200px;font-weight:bold;color:#3d3d3d">Calibri</span>
  <span class="t" style="letter-spacing:-0.16px;left:361.900px;top:195.5px;font-size:10.8px;font-weight:400;font-family:'Liberation Sans',sans-serif;color:#6b6b6b">Calibri</span>
  <span class="t" style="letter-spacing:0.21px;left:361.900px;top:210.0px;font-size:7.800px;color:#707070">Calibri</span>
  <div class="abs" style="left:315.300px;top:228.4px;width:32.600px;height:34.200px;background:#fefefe;border:0.900px solid #b9b9b9"></div>
  <span class="t" style="letter-spacing:-0.58px;left:320.1px;top:245.4px;font-size:14.2px;color:#2d2d2d">Aa</span>
  <span class="t" style="letter-spacing:0.14px;left:361.900px;top:231.4px;font-size:8.200px;font-weight:bold;color:#3d3d3d">Arial</span>
  <span class="t" style="letter-spacing:0.24px;left:361.900px;top:239.9px;font-size:10.8px;font-weight:400;font-family:'Liberation Sans',sans-serif;color:#5e5e5e">Arial</span>
  <span class="t" style="letter-spacing:0.32px;left:361.900px;top:254.3px;font-size:7.800px;color:#707070">Arial</span>
  <div class="abs" style="left:315.300px;top:273.6px;width:32.600px;height:34.200px;background:#fefefe;border:0.900px solid #b9b9b9"></div>
  <span class="t" style="letter-spacing:-0.48px;left:321.1px;top:291.8px;font-size:12.8px;color:#2d2d2d">Aa</span>
  <span class="t" style="letter-spacing:0.03px;left:361.900px;top:276.7px;font-size:8.200px;font-weight:bold;color:#3d3d3d">Corbel</span>
  <span class="t" style="letter-spacing:-0.10px;left:361.900px;top:286.0px;font-size:10.8px;font-weight:400;font-family:'Liberation Sans',sans-serif;color:#6b6b6b">Corbel</span>
  <span class="t" style="letter-spacing:0.26px;left:361.900px;top:300.4px;font-size:7.800px;color:#707070">Corbel</span>
  <div class="abs" style="left:315.300px;top:318.8px;width:32.600px;height:34.200px;background:#fefefe;border:0.900px solid #b9b9b9"></div>
  <span class="t" style="letter-spacing:-0.48px;left:321.1px;top:337.0px;font-size:12.8px;color:#2d2d2d">Aa</span>
  <span class="t" style="letter-spacing:0.02px;left:361.900px;top:321.9px;font-size:8.200px;font-weight:bold;color:#3d3d3d">Candara</span>
  <span class="t" style="letter-spacing:-0.30px;left:361.900px;top:331.2px;font-size:10.8px;font-weight:400;font-family:'Liberation Sans',sans-serif;color:#6b6b6b">Candara</span>
  <span class="t" style="letter-spacing:0.14px;left:361.900px;top:345.6px;font-size:7.800px;color:#707070">Candara</span>
  <div class="abs" style="left:315.300px;top:364.1px;width:32.600px;height:34.200px;background:#fefefe;border:0.900px solid #b9b9b9"></div>
  <span class="t" style="letter-spacing:-0.60px;left:321.1px;top:381.7px;font-size:13.4px;color:#2d2d2d">Aa</span>
  <span class="t" style="letter-spacing:0.08px;left:361.900px;top:367.1px;font-size:8.200px;font-weight:bold;color:#3d3d3d">Franklin Gothic</span>
  <span class="t" style="letter-spacing:-0.09px;left:361.900px;top:375.1px;font-size:10.6px;font-weight:700;font-family:'Liberation Sans',sans-serif;color:#5a5a5a">Franklin Gothic Me...</span>
  <span class="t" style="letter-spacing:-0.15px;left:361.900px;top:389.3px;font-size:8.800px;color:#707070">Franklin Gothic Book</span>
  <div class="abs" style="left:315.300px;top:409.3px;width:32.600px;height:34.200px;background:#fefefe;border:0.900px solid #b9b9b9"></div>
  <span class="t" style="letter-spacing:-0.48px;left:321.1px;top:427.5px;font-size:12.8px;color:#2d2d2d">Aa</span>
  <span class="t" style="letter-spacing:0.05px;left:361.900px;top:412.4px;font-size:8.200px;font-weight:bold;color:#3d3d3d">Century Gothic</span>
  <span class="t" style="transform:scaleX(1.093);transform-origin:0 0;left:361.900px;top:420.8px;font-size:11.800px;font-weight:400;font-family:'Liberation Sans',sans-serif;color:#6b6b6b">Century Gothic</span>
  <span class="t" style="transform:scaleX(1.161);transform-origin:0 0;left:361.900px;top:435.4px;font-size:8.800px;color:#707070">Century Gothic</span>
  <div class="abs" style="left:310px;top:449px;width:177.600px;height:0.800px;background:#e2e2e2"></div>
  <span class="t" style="letter-spacing:-0.24px;left:329.800px;top:454.600px;font-size:9.200px;color:#555"><u>C</u>ustomize Fonts...</span>
  <svg style="left:391px;top:468.600px" width="15" height="3" viewBox="0 0 15 3" fill="#b5b5b5"><circle cx="1.500" cy="1.200" r="0.800"/><circle cx="5.200" cy="1.200" r="0.800"/><circle cx="8.900" cy="1.200" r="0.800"/><circle cx="12.600" cy="1.200" r="0.800"/></svg>
  <svg style="left:349px;top:64.500px" width="11" height="15" viewBox="0 0 11 15"><path d="M0.700 0.700v11.400l2.500-2.300l1.800 4.100l1.700-0.800l-1.800-3.900l4.600-0.300z" fill="#fcfcfc" stroke="#8e8e8e" stroke-width="0.800" stroke-linejoin="round"/></svg>
  <!-- STATUS BAR -->
  <div id="status" class="abs"></div>
  <div class="abs" style="left:-6px;top:519.400px;width:972px;height:0.800px;background:#dcdcdc"></div>
  <span class="t st" style="letter-spacing:-0.30px;left:4.400px">Slide Master</span>
  <svg style="left:56px;top:522px" width="11" height="11" viewBox="0 0 11 11" fill="none" stroke="#7d7d7d" stroke-width="0.800">
    <rect x="0.600" y="1" width="5.800" height="7.800"/><path d="M3.600 1v7.800"/><path d="M6.400 5.200l1.600 1.600l2.600-4" stroke-width="1"/>
  </svg>
  <span class="t st" style="letter-spacing:-0.35px;left:73.400px">English (United States)</span>
  <svg style="left:744px;top:521.300px" width="216" height="13.600" viewBox="0 0 216 13.600" fill="none" stroke="#8a8a8a" stroke-width="0.850">
    <!-- normal -->
    <rect x="1.600" y="2.200" width="9.600" height="9"/><path d="M4.400 2.200v9M4.400 8.400h6.800"/><rect x="6" y="3.800" width="3.400" height="2.600"/>
    <!-- sorter -->
    <rect x="21" y="2.200" width="4" height="3.600"/><rect x="26.800" y="2.200" width="4" height="3.600"/><rect x="21" y="7.600" width="4" height="3.600"/><rect x="26.800" y="7.600" width="4" height="3.600"/>
    <!-- reading -->
    <rect x="40.200" y="2.200" width="10.400" height="9"/><path d="M43.200 2.200v9M45.400 2.200v9M47.600 2.200v9"/>
    <!-- present -->
    <path d="M59.600 2.600h10.400M60.600 2.600v5h8.400v-5M64.800 7.600v2.600M62.400 10.800h4.800"/>
    <!-- zoom -->
    <path d="M78 6.600h4.400" stroke="#444" stroke-width="1.400"/>
    <path d="M86.400 6.600h74" stroke="#9a9a9a" stroke-width="0.800"/>
    <path d="M123.800 4.600v4" stroke="#9a9a9a" stroke-width="0.800"/>
    <rect x="106.400" y="2.400" width="2.600" height="8.600" fill="#444" stroke="none"/>
    <path d="M164.400 6.600h5M166.900 4.100v5" stroke="#444" stroke-width="1.400"/>
    <!-- fit -->
    <rect x="197.600" y="1.800" width="9.600" height="9.600" stroke="#555"/>
    <path d="M199.400 3.600l2 2M205.400 3.600l-2 2M199.400 9.600l2-2M205.400 9.600l-2-2" stroke="#555"/>
  </svg>
  <span class="t st" style="letter-spacing:-0.79px;left:921.200px">60%</span>
</div>
</body>
</html>
